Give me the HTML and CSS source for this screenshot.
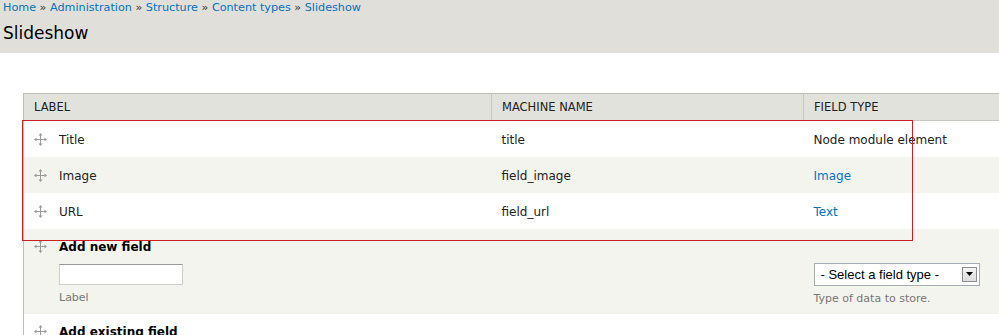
FILE: index.html
```html
<!DOCTYPE html>
<html lang="en">
<head>
    <meta charset="UTF-8">
    <title>Slideshow</title>
    <link rel="stylesheet" href="styles.css">
</head>
<body>
<div class="branding">
    <div class="breadcrumb">
        <a href="#">Home</a> &raquo; <a href="#">Administration</a> &raquo; <a href="#">Structure</a> &raquo; <a href="#">Content types</a> &raquo; <a href="#">Slideshow</a>
    </div>
    <h1 class="page-title">Slideshow</h1>
</div>

<div class="content">
    <table class="field-overview">
        <thead>
            <tr>
                <th class="col-label">Label</th>
                <th class="col-machine">Machine name</th>
                <th class="col-type">Field type</th>
            </tr>
        </thead>
        <tbody>
            <tr class="odd">
                <td><span class="handle"><svg width="13" height="13"><use href="#move"/></svg></span>Title</td>
                <td>title</td>
                <td>Node module element</td>
            </tr>
            <tr class="even">
                <td><span class="handle"><svg width="13" height="13"><use href="#move"/></svg></span>Image</td>
                <td>field_image</td>
                <td><a href="#">Image</a></td>
            </tr>
            <tr class="odd">
                <td><span class="handle"><svg width="13" height="13"><use href="#move"/></svg></span>URL</td>
                <td>field_url</td>
                <td><a href="#">Text</a></td>
            </tr>
            <tr class="even add-row">
                <td>
                    <div class="add-title"><span class="handle"><svg width="13" height="13"><use href="#move"/></svg></span>Add new field</div>
                    <div class="add-body">
                        <input type="text" class="form-text">
                        <div class="description">Label</div>
                    </div>
                </td>
                <td></td>
                <td>
                    <div class="add-body-right">
                        <div class="fake-select">
                            <span>- Select a field type -</span>
                            <span class="select-btn">
                                <svg width="7" height="4" viewBox="0 0 7 4"><path d="M0 0h7L3.5 4z" fill="#000"/></svg>
                            </span>
                        </div>
                        <div class="description">Type of data to store.</div>
                    </div>
                </td>
            </tr>
            <tr class="odd add-existing">
                <td><div class="add-title"><span class="handle"><svg width="13" height="13"><use href="#move"/></svg></span>Add existing field</div></td>
                <td></td>
                <td></td>
            </tr>
        </tbody>
    </table>
    <div class="highlight"></div>
</div>

<svg width="0" height="0" class="defs">
    <defs>
        <symbol id="move" viewBox="0 0 13 13">
            <path d="M6.5 2v9M2 6.5h9" stroke="#999" stroke-width="1"/>
            <path d="M6.5 0L4.5 2.5h4zM6.5 13L4.5 10.5h4zM0 6.5L2.5 4.5v4zM13 6.5L10.5 4.5v4z" fill="#999"/>
        </symbol>
    </defs>
</svg>
</body>
</html>
```

FILE: styles.css
```css
body, h1, table, th, td {
    margin: 0;
    padding: 0;
}

body {
    font-family: "DejaVu Sans", Verdana, sans-serif;
    font-size: 12px;
    color: #333;
    background: #fff;
    width: 999px;
    height: 335px;
    overflow: hidden;
}

a {
    color: #0074bd;
    text-decoration: none;
}

.defs {
    position: absolute;
}

.branding {
    background: #e0dfda;
    height: 53px;
    padding: 0 3px;
}

.breadcrumb {
    font-size: 11.2px;
    line-height: 16px;
    color: #333;
}

.page-title {
    font-weight: normal;
    font-size: 17px;
    line-height: 20px;
    color: #000;
    margin-top: 7px;
}

.content {
    position: relative;
    padding: 40px 0 0 23px;
}

.field-overview {
    border-collapse: collapse;
    width: 1010px;
    border-top: 1px solid #bebfb9;
    border-left: 1px solid #bebfb9;
}

.field-overview th {
    background: #e1e2dc;
    font-weight: normal;
    text-transform: uppercase;
    text-align: left;
    font-size: 11.5px;
    color: #222;
    height: 26px;
    padding: 0 10px;
    border-bottom: 1px solid #c8c8c2;
    border-left: 1px solid #c8c8c2;
}

.field-overview th.col-label {
    width: 447px;
    border-left: 0;
}

.field-overview th.col-machine {
    width: 291px;
}

.field-overview td {
    height: 36px;
    padding: 3px 10px 0;
    box-sizing: border-box;
    vertical-align: middle;
    font-size: 12px;
    color: #222;
}

.field-overview tr.odd {
    background: #fff;
}

.field-overview tr.even {
    background: #f3f4ee;
}

.handle {
    display: inline-block;
    width: 13px;
    height: 13px;
    margin-right: 12px;
    vertical-align: -2px;
}

.handle svg {
    display: block;
}

.add-row td {
    vertical-align: top;
    height: 85px;
    padding-top: 0;
}

.add-existing td {
    vertical-align: top;
    padding-top: 0;
}

.add-title {
    font-weight: bold;
    color: #000;
    padding-top: 10px;
    line-height: 17px;
}

.add-body {
    padding-left: 25px;
    padding-top: 8px;
}

.add-body-right {
    padding-top: 34px;
}

.form-text {
    display: block;
    width: 124px;
    height: 21px;
    box-sizing: border-box;
    border: 1px solid #ccc;
    border-top-color: #999;
    margin: 0;
    padding: 0;
}

.description {
    color: #777;
    font-size: 11px;
    margin-top: 6px;
}

.fake-select {
    display: flex;
    align-items: center;
    justify-content: space-between;
    width: 166px;
    height: 23px;
    box-sizing: border-box;
    border: 1px solid #a5acb2;
    font-family: "Liberation Sans", Arial, sans-serif;
    font-size: 13px;
    color: #000;
    padding: 0 2px 0 6px;
    background: #fff;
}

.select-btn {
    display: flex;
    align-items: center;
    justify-content: center;
    width: 15px;
    height: 15px;
    box-sizing: border-box;
    border: 1px solid #8d8d8d;
    background: linear-gradient(#f4f4f4, #dcdcdc);
}

.highlight {
    position: absolute;
    left: 22px;
    top: 67px;
    width: 889px;
    height: 119px;
    border: 1px solid #cc1f24;
    pointer-events: none;
}
```
